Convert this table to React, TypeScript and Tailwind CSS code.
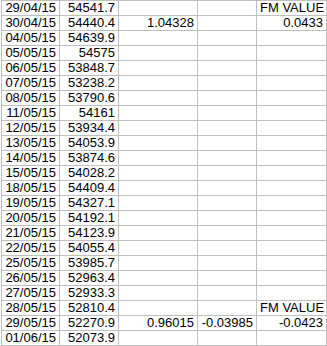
const rows: [string, string, string?, string?, string?][] = [
  ['29/04/15', '54541.7', '', '', 'FM VALUE'],
  ['30/04/15', '54440.4', '1.04328', '', '0.0433'],
  ['04/05/15', '54639.9'],
  ['05/05/15', '54575'],
  ['06/05/15', '53848.7'],
  ['07/05/15', '53238.2'],
  ['08/05/15', '53790.6'],
  ['11/05/15', '54161'],
  ['12/05/15', '53934.4'],
  ['13/05/15', '54053.9'],
  ['14/05/15', '53874.6'],
  ['15/05/15', '54028.2'],
  ['18/05/15', '54409.4'],
  ['19/05/15', '54327.1'],
  ['20/05/15', '54192.1'],
  ['21/05/15', '54123.9'],
  ['22/05/15', '54055.4'],
  ['25/05/15', '53985.7'],
  ['26/05/15', '52963.4'],
  ['27/05/15', '52933.3'],
  ['28/05/15', '52810.4', '', '', 'FM VALUE'],
  ['29/05/15', '52270.9', '0.96015', '-0.03985', '-0.0423'],
  ['01/06/15', '52073.9'],
]

const cell = 'h-[15px] border-r border-b border-[#c0c0c0] px-[3px] leading-[14px] whitespace-nowrap overflow-hidden'

export default function App() {
  return (
    <div className="w-[327px] h-[346px] bg-white overflow-hidden font-['Liberation_Sans',Arial,sans-serif] text-[13px] text-black">
      <div className="ml-px border-t border-l border-[#c0c0c0] w-[326px]">
        {rows.map(([date, price, ratio, diff, fm], i) => (
          <div key={i} className="flex">
            <div className={`${cell} w-[58px] text-right`}>{date}</div>
            <div className={`${cell} w-[59px] text-right`}>{price}</div>
            <div className={`${cell} w-[79px] text-right`}>{ratio}</div>
            <div className={`${cell} w-[59px] text-right`}>{diff}</div>
            <div className={`${cell} w-[70px] ${fm === 'FM VALUE' ? 'text-left px-[1px]' : 'text-right'}`}>{fm}</div>
          </div>
        ))}
      </div>
    </div>
  )
}
